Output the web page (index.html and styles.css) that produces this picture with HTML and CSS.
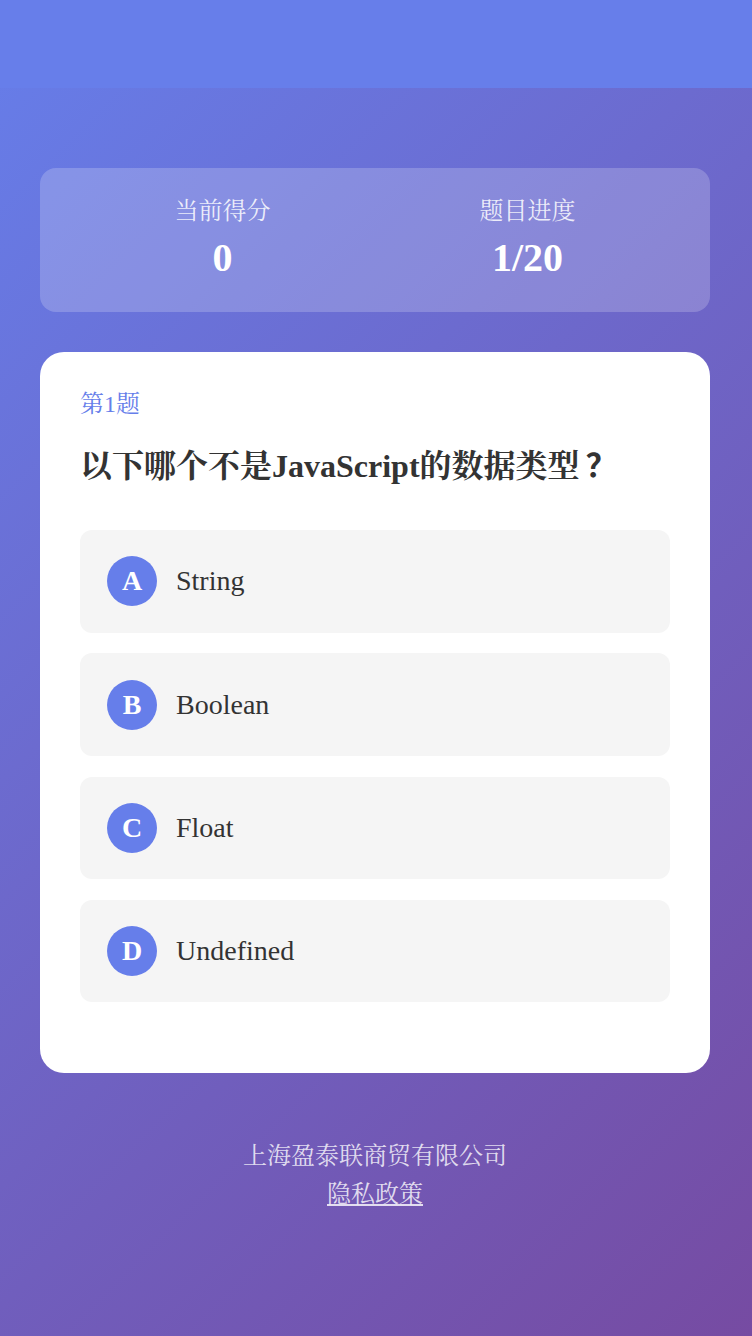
FILE: index.html
```html
<!DOCTYPE html>
<html lang="zh-CN">
<head>
<meta charset="utf-8">
<title>答题</title>
<link rel="stylesheet" href="styles.css">
</head>
<body>
<div class="page">
  <header class="topbar"></header>
  <main class="content">
    <section class="stats">
      <div class="stat">
        <div class="stat-label">当前得分</div>
        <div class="stat-value">0</div>
      </div>
      <div class="stat">
        <div class="stat-label">题目进度</div>
        <div class="stat-value">1/20</div>
      </div>
    </section>
    <section class="quiz">
      <div class="q-num">第1题</div>
      <h1 class="q-title">以下哪个不是JavaScript的数据类型<span class="qmark">？</span></h1>
      <ul class="options">
        <li class="option"><span class="badge">A</span><span class="opt-text">String</span></li>
        <li class="option"><span class="badge">B</span><span class="opt-text">Boolean</span></li>
        <li class="option"><span class="badge">C</span><span class="opt-text">Float</span></li>
        <li class="option"><span class="badge">D</span><span class="opt-text">Undefined</span></li>
      </ul>
    </section>
    <footer class="footer">
      <div class="company">上海盈泰联商贸有限公司</div>
      <a class="privacy" href="#">隐私政策</a>
    </footer>
  </main>
</div>
</body>
</html>
```
FILE: styles.css
```css
html, body {
  margin: 0;
  padding: 0;
}
body {
  font-family: "Liberation Serif", "Noto Serif CJK SC", "Noto Sans CJK SC", serif;
  background: linear-gradient(135deg, #667eea 0%, #764ba2 100%);
  min-height: 1336px;
  color: #333;
}
.page {
  min-height: 1336px;
}
.topbar {
  height: 88px;
  background: #677eea;
}
.content {
  width: 750px;
  box-sizing: border-box;
  padding: 80px 40px 0;
}
.stats {
  display: flex;
  justify-content: space-around;
  padding: 25px 30px 30px;
  background: rgba(255, 255, 255, 0.2);
  border-radius: 16px;
  color: #fff;
  text-align: center;
}
.stat-label {
  font-size: 24px;
  line-height: 36px;
  color: rgba(255, 255, 255, 0.85);
}
.stat-value {
  margin-top: 5px;
  font-size: 40px;
  line-height: 48px;
  font-weight: bold;
}
.quiz {
  margin-top: 40px;
  background: #fff;
  border-radius: 24px;
  padding: 40px 40px 71px;
}
.q-num {
  font-size: 24px;
  line-height: 24px;
  color: #667eea;
}
.q-title {
  margin: 28px 0 42px;
  font-size: 32px;
  line-height: 44px;
  font-weight: bold;
  color: #333;
}
.qmark {
  font-family: "Noto Sans CJK SC", sans-serif;
  line-height: 1;
  margin-left: 6px;
}
.options {
  list-style: none;
  margin: 0;
  padding: 0;
  display: flex;
  flex-direction: column;
  gap: 20.75px;
}
.option {
  display: flex;
  align-items: center;
  gap: 19px;
  padding: 26.25px 27px;
  background: #f5f5f5;
  border-radius: 12px;
}
.badge {
  width: 50px;
  height: 50px;
  border-radius: 50%;
  background: #667eea;
  color: #fff;
  font-size: 28px;
  font-weight: bold;
  display: flex;
  align-items: center;
  justify-content: center;
  flex-shrink: 0;
}
.opt-text {
  font-size: 28px;
  color: #333;
}
.footer {
  margin-top: 64px;
  text-align: center;
  font-size: 24px;
  line-height: 38px;
  color: rgba(255, 255, 255, 0.8);
}
.privacy {
  color: rgba(255, 255, 255, 0.8);
  text-decoration: underline;
}
```
